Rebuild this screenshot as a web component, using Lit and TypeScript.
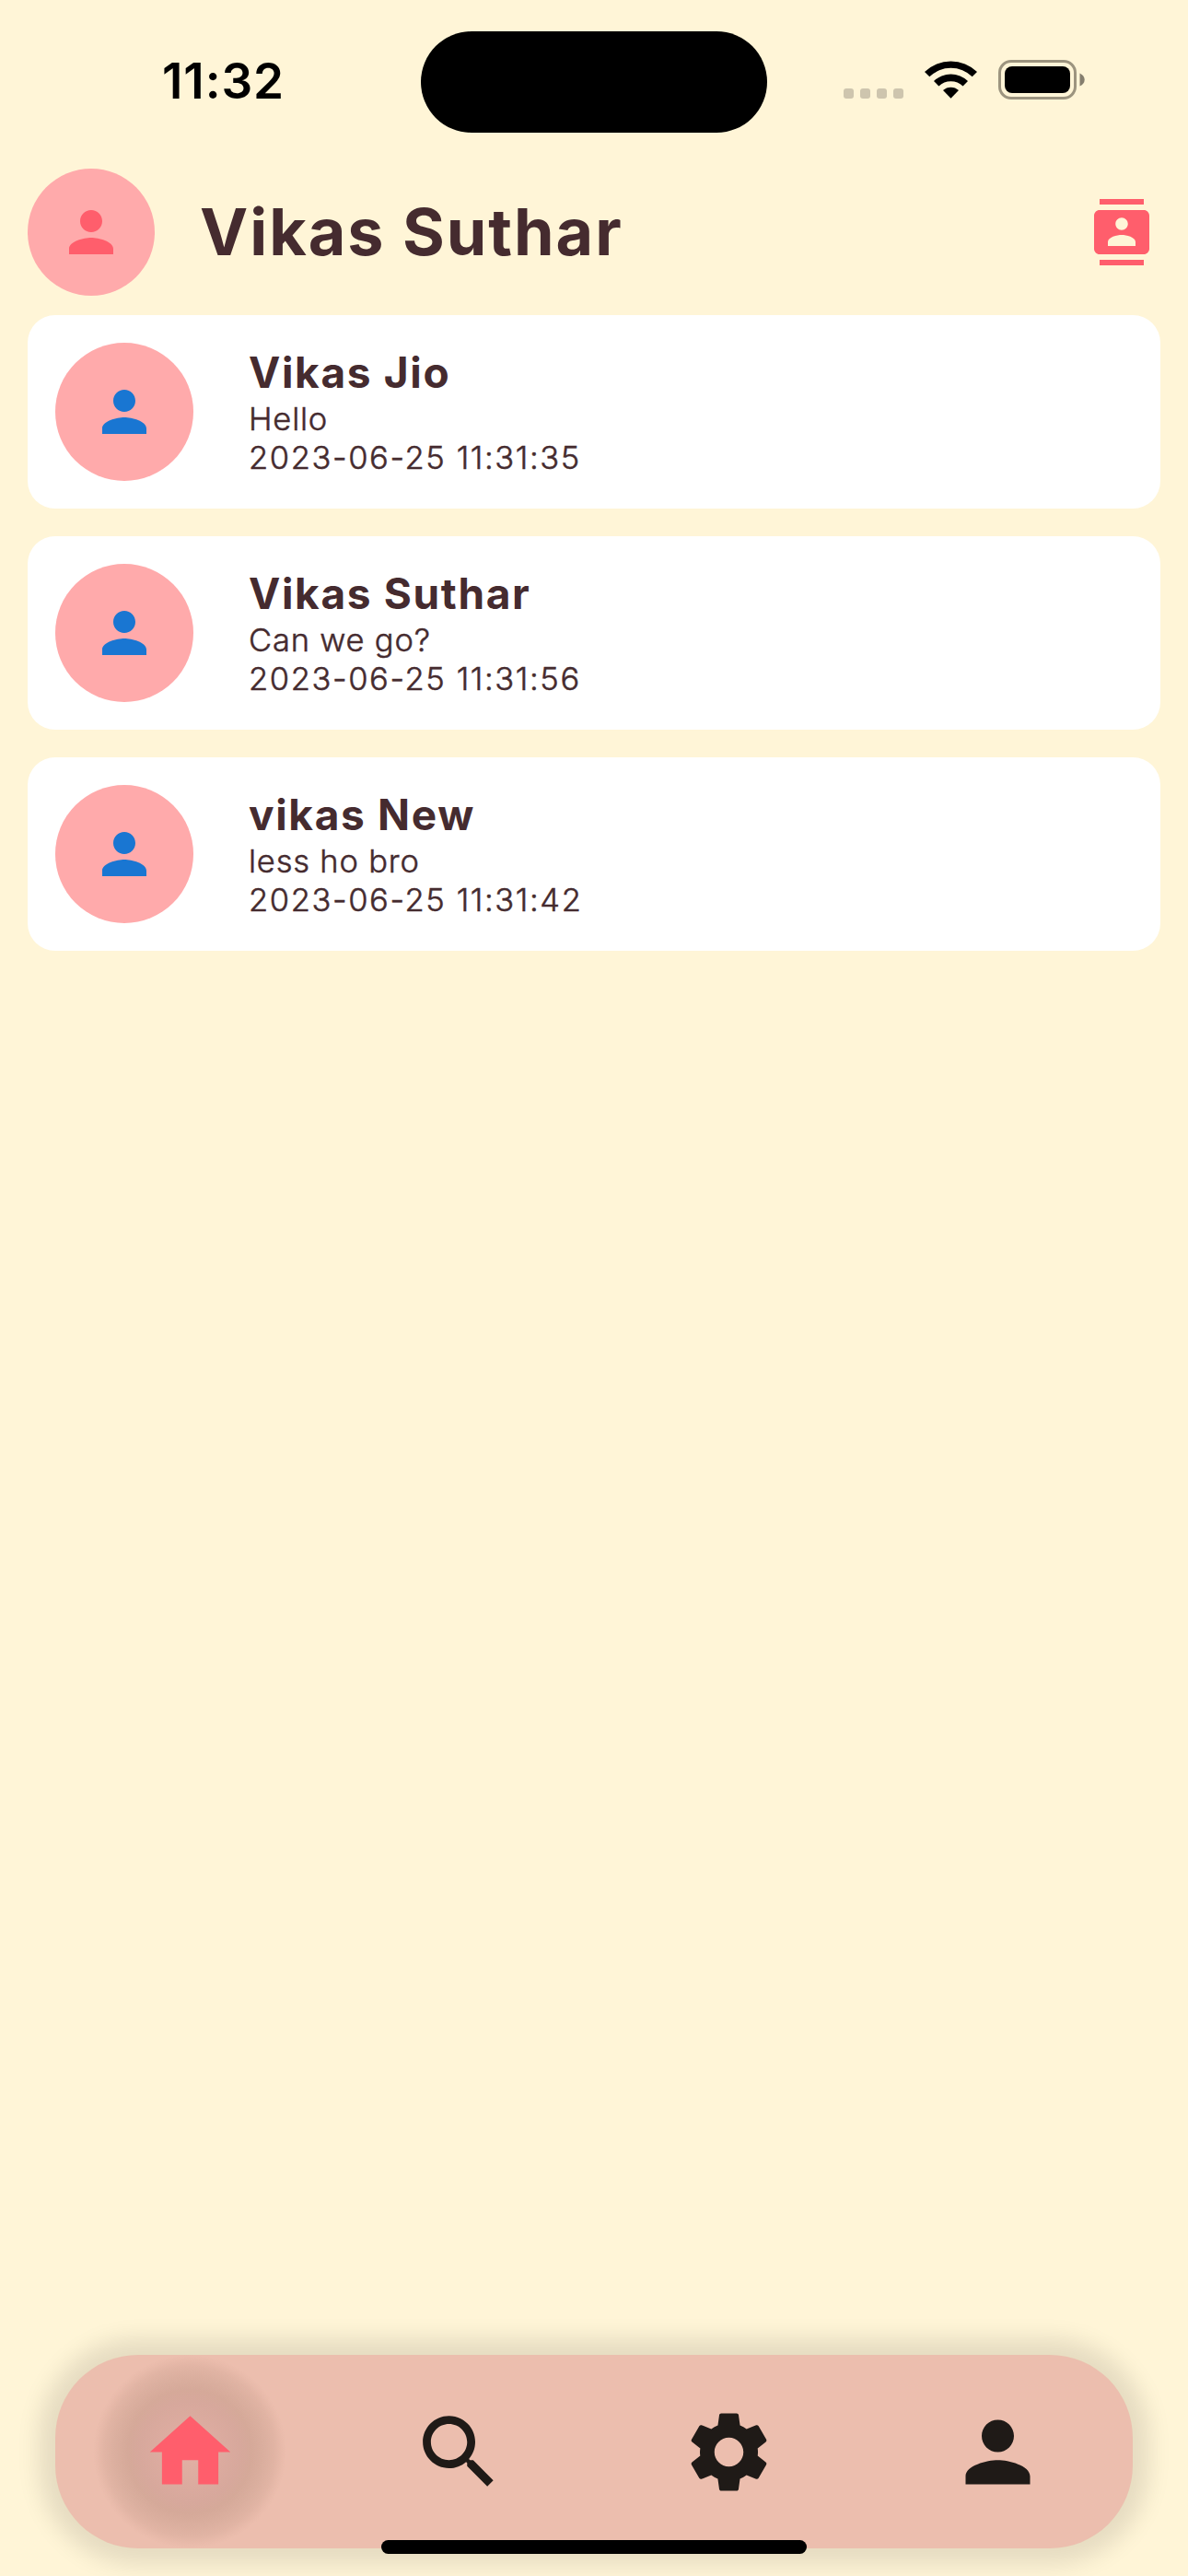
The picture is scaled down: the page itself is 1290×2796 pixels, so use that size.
import { LitElement, html, css, svg } from "lit";
import { customElement, property } from "lit/decorators.js";

const ICONS: Record<string, string> = {
  person:
    "M12 12c2.21 0 4-1.79 4-4s-1.79-4-4-4-4 1.79-4 4 1.79 4 4 4zm0 2c-2.67 0-8 1.34-8 4v2h16v-2c0-2.66-5.33-4-8-4z",
  contacts:
    "M20 0H4v2h16V0zM4 24h16v-2H4v2zM20 4H4c-1.1 0-2 .9-2 2v12c0 1.1.9 2 2 2h16c1.1 0 2-.9 2-2V6c0-1.1-.9-2-2-2zm-8 2.75c1.24 0 2.25 1.01 2.25 2.25s-1.01 2.25-2.25 2.25S9.75 10.24 9.75 9 10.76 6.75 12 6.75zM17 17H7v-1.5c0-1.67 3.33-2.5 5-2.5s5 .83 5 2.5V17z",
  home: "M10 20v-6h4v6h5v-8h3L12 3 2 12h3v8z",
  search:
    "M15.5 14h-.79l-.28-.27C15.41 12.59 16 11.11 16 9.5 16 5.91 13.09 3 9.5 3S3 5.91 3 9.5 5.91 16 9.5 16c1.61 0 3.09-.59 4.23-1.57l.27.28v.79l5 4.99L20.49 19l-4.99-5zm-6 0C7.01 14 5 11.99 5 9.5S7.01 5 9.5 5 14 7.01 14 9.5 11.99 14 9.5 14z",
  settings:
    "M19.14 12.94c.04-.3.06-.61.06-.94 0-.32-.02-.64-.07-.94l2.03-1.58c.18-.14.23-.41.12-.61l-1.92-3.32c-.12-.22-.37-.29-.59-.22l-2.39.96c-.5-.38-1.03-.7-1.62-.94L14.4 2.81c-.04-.24-.24-.41-.48-.41h-3.84c-.24 0-.43.17-.47.41L9.25 5.35C8.66 5.59 8.12 5.92 7.63 6.29L5.24 5.33c-.22-.08-.47 0-.59.22L2.74 8.87c-.12.21-.08.47.12.61l2.03 1.58c-.05.3-.09.63-.09.94s.02.64.07.94l-2.03 1.58c-.18.14-.23.41-.12.61l1.92 3.32c.12.22.37.29.59.22l2.39-.96c.5.38 1.03.7 1.62.94l.36 2.54c.05.24.24.41.48.41h3.84c.24 0 .44-.17.47-.41l.36-2.54c.59-.24 1.13-.56 1.62-.94l2.39.96c.22.08.47 0 .59-.22l1.92-3.32c.12-.22.07-.47-.12-.61l-2.01-1.58zM12 15.6c-1.98 0-3.6-1.62-3.6-3.6s1.62-3.6 3.6-3.6 3.6 1.62 3.6 3.6-1.62 3.6-3.6 3.6z",
};

@customElement("m-icon")
class MIcon extends LitElement {
  @property() name = "person";
  static styles = css`
    :host { display: block; width: 72px; height: 72px; }
    .glyph { display: block; width: 100%; height: 100%; fill: currentColor; }
  `;
  render() {
    return html`<svg class="glyph" viewBox="0 0 24 24">${svg`<path d=${ICONS[this.name]}></path>`}</svg>`;
  }
}

@customElement("status-bar")
class StatusBar extends LitElement {
  static styles = css`
    :host { display: grid; grid-template-columns: 457px 376px 1fr; height: 177px; color: #000; }
    .time { padding: 56px 0 0 28px; text-align: center; font-size: 53px; line-height: 64px; font-weight: 600; letter-spacing: 0.9px; }
    .island { margin-top: 33.5px; height: 110.5px; border-radius: 56px; background: #000; }
    .status { display: flex; align-items: flex-start; padding: 65px 0 0 83px; }
    .dots { display: flex; gap: 7px; margin: 31px 23px 0 0; }
    .dot { width: 11px; height: 11px; border-radius: 3px; background: #cec5ae; }
    .wifi { display: block; width: 57px; height: 42px; margin-right: 23px; }
    .battery { display: block; width: 95px; height: 43px; }
  `;
  render() {
    return html`
      <div class="time">11:32</div>
      <div class="island"></div>
      <div class="status">
        <div class="dots">${[0, 1, 2, 3].map(() => html`<span class="dot"></span>`)}</div>
        <svg class="wifi" viewBox="0 0 57 42">
          <path d="M0 13A41 41 0 0 1 57 13L51.7 18.3A33.2 33.2 0 0 0 5.3 18.3Z"></path>
          <path d="M10 23A26.6 26.6 0 0 1 47 23L41.6 28.4A19 19 0 0 0 15.4 28.4Z"></path>
          <path d="M20 33A12.4 12.4 0 0 1 37 33L28.5 41.8Z"></path>
        </svg>
        <svg class="battery" viewBox="0 0 95 43">
          <rect x="1.5" y="1.5" width="82" height="40" rx="12.5" fill="none" stroke="#9c947f" stroke-width="3"></rect>
          <rect x="7" y="7" width="71" height="29" rx="8"></rect>
          <path d="M88.5 14.5Q93.7 17 93.7 21.5Q93.7 26 88.5 28.5Z" fill="#857e6e"></path>
        </svg>
      </div>
    `;
  }
}

@customElement("chat-card")
class ChatCard extends LitElement {
  @property() name = "";
  @property() message = "";
  @property() time = "";
  static styles = css`
    :host { display: flex; gap: 60px; height: 150px; padding: 30px; border-radius: 30px; background: #fff; color: #452b2f; }
    .avatar { display: grid; place-items: center; width: 150px; height: 150px; border-radius: 50%; background: #ffaaab; color: #1976d2; }
    .name { padding-top: 3px; font-size: 46px; line-height: 59px; font-weight: 700; letter-spacing: 1.65px; white-space: nowrap; }
    .line { font-size: 34.5px; line-height: 42px; font-weight: 300; -webkit-text-stroke: 0.5px currentColor; white-space: nowrap; }
    .message { letter-spacing: 0.8px; }
    .stamp { letter-spacing: 1.6px; }
  `;
  render() {
    return html`
      <div class="avatar"><m-icon name="person"></m-icon></div>
      <div class="body">
        <div class="name">${this.name}</div>
        <div class="line message">${this.message}</div>
        <div class="line stamp">${this.time}</div>
      </div>
    `;
  }
}

@customElement("nav-bar")
class NavBar extends LitElement {
  static styles = css`
    :host { display: grid; grid-template-columns: repeat(4, 1fr); place-items: center; height: 210px; border-radius: 90px; background: #ecbeae; box-shadow: 0 0 24px 18px rgba(0, 0, 0, 0.1); color: #1f1a17; }
    .item { display: grid; place-items: center; width: 210px; height: 210px; border-radius: 50%; }
    .item m-icon { width: 105px; height: 105px; }
    .active { color: #ff5e6c; background: radial-gradient(circle closest-side, #e3b0a5 0, #d7a89c 52%, #d5a999 64%, #dbaf9f 78%, #e1b4a4 88%, #e9bbab 96%, #ecbeae 100%); }
  `;
  render() {
    return ["home", "search", "settings", "person"].map(
      (n, i) => html`<div class="item ${i === 0 ? "active" : ""}"><m-icon name=${n}></m-icon></div>`
    );
  }
}

const CHATS = [
  { name: "Vikas Jio", message: "Hello", time: "2023-06-25 11:31:35" },
  { name: "Vikas Suthar", message: "Can we go?", time: "2023-06-25 11:31:56" },
  { name: "vikas New", message: "less ho bro", time: "2023-06-25 11:31:42" },
];

@customElement("app-root")
class AppRoot extends LitElement {
  static styles = css`
    :host { display: flex; flex-direction: column; position: relative; box-sizing: border-box; width: 1290px; height: 2796px; overflow: hidden; background: #fff5d7; font-family: Inter, "Liberation Sans", sans-serif; }
    .header { display: flex; align-items: center; height: 150px; padding: 0 36px 0 30px; color: #ff5e6c; }
    .avatar { display: grid; place-items: center; width: 138px; height: 138px; border-radius: 50%; background: #ffaaab; }
    .title { flex: 1; margin-left: 49px; font-size: 70px; line-height: 84px; font-weight: 700; letter-spacing: 1.95px; color: #452b2f; }
    .list { flex: 1; display: flex; flex-direction: column; gap: 30px; padding: 15px 30px 0; }
    .nav { margin: 0 60px 30px; }
    .indicator { position: absolute; left: 414px; bottom: 24px; width: 462px; height: 15px; border-radius: 7.5px; background: #000; }
  `;
  render() {
    return html`
      <status-bar></status-bar>
      <div class="header">
        <div class="avatar"><m-icon name="person"></m-icon></div>
        <div class="title">Vikas Suthar</div>
        <m-icon name="contacts"></m-icon>
      </div>
      <div class="list">
        ${CHATS.map((c) => html`<chat-card .name=${c.name} .message=${c.message} .time=${c.time}></chat-card>`)}
      </div>
      <nav-bar class="nav"></nav-bar>
      <div class="indicator"></div>
    `;
  }
}
